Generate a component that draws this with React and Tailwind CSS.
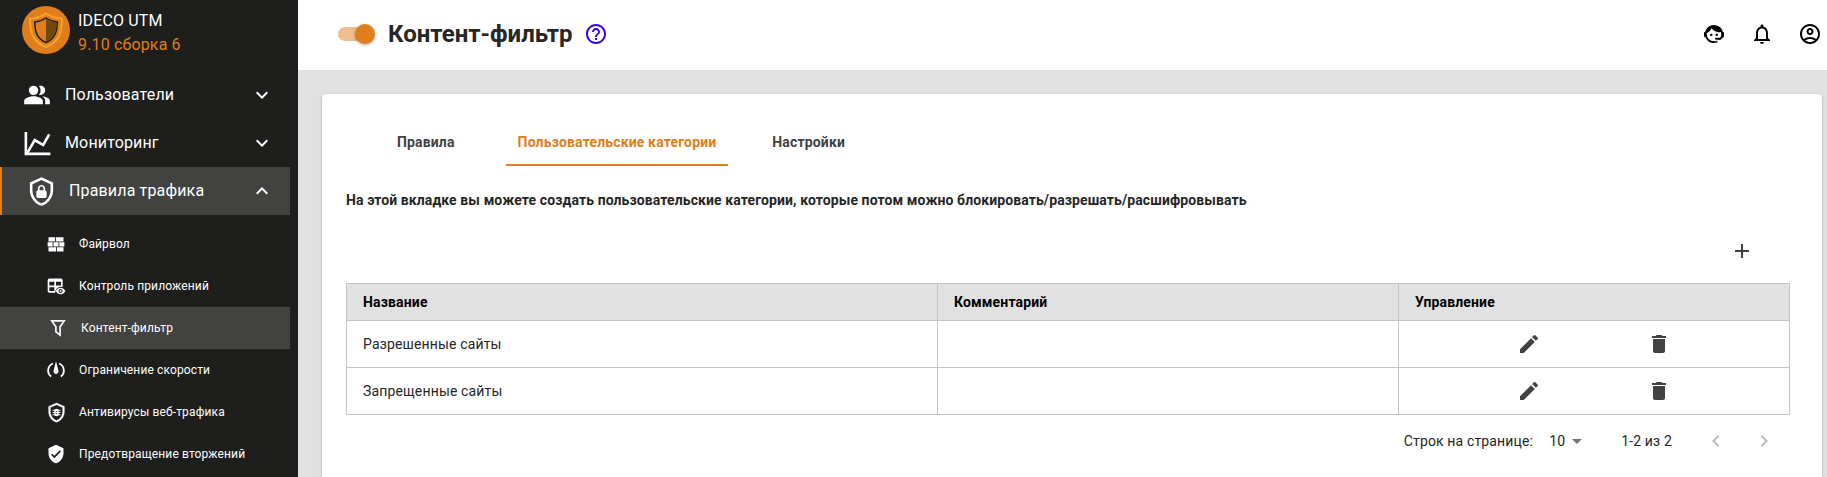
import {
  MdPeopleAlt, MdExpandMore, MdExpandLess, MdHelpOutline, MdNotificationsNone,
  MdOutlineAccountCircle, MdAdd, MdEdit, MdDelete, MdChevronLeft, MdChevronRight, MdArrowDropDown,
} from "react-icons/md";

const Svg = ({ className, children }) => (
  <svg viewBox="0 0 24 24" fill="currentColor" className={`shrink-0 ${className}`}>{children}</svg>
);

const SHIELD = "M21,11C21,16.55 17.16,21.74 12,23C6.84,21.74 3,16.55 3,11V5L12,1L21,5V11M12,21C15.75,20 19,15.54 19,11.22V6.3L12,3.18L5,6.3V11.22C5,15.54 8.25,20 12,21Z";

const ChartIcon = () => (
  <Svg className="size-[31px]"><path d="M16,11.78L20.24,4.45L21.97,5.45L16.74,14.5L10.23,10.75L5.46,19H22V21H2V3H4V17.54L9.5,8L16,11.78Z" /></Svg>
);
const ShieldLockIcon = () => (
  <Svg className="size-[31px]"><path d={SHIELD + "M14.8,11V9.5C14.8,8.1 13.4,7 12,7C10.6,7 9.2,8.1 9.2,9.5V11C8.6,11 8,11.6 8,12.2V15.7C8,16.4 8.6,17 9.2,17H14.7C15.4,17 16,16.4 16,15.8V12.3C16,11.6 15.4,11 14.8,11M13.5,11H10.5V9.5C10.5,8.7 11.2,8.2 12,8.2C12.8,8.2 13.5,8.7 13.5,9.5V11Z"} /></Svg>
);
const WallIcon = () => (
  <Svg className="size-5"><path d="M3,16H12V21H3V16M2,10H8V15H2V10M9,10H15V15H9V10M16,10H22V15H16V10M13,16H21V21H13V16M3,4H11V9H3V4M12,4H21V9H12V4Z" /></Svg>
);
const TableEyeIcon = () => (
  <Svg className="size-5">
    <path fillRule="evenodd" d="M4 3H18A2 2 0 0 1 20 5V13.2A8 8 0 0 0 11.500 17.500L11 20H4A2 2 0 0 1 2 18V5A2 2 0 0 1 4 3M4 7V11.500H10V7H4M12 7V11.500H18V7H12M4 13.500V18H10V13.500H4Z" />
    <path fillRule="evenodd" d="M17.500 14C20 14 22.200 15.600 23.200 18C22.200 20.400 20 22 17.500 22S12.800 20.400 11.800 18C12.800 15.600 15 14 17.500 14M17.500 15.500A2.500 2.500 0 0 0 17.500 20.500A2.500 2.500 0 0 0 17.500 15.500M17.500 16.800A1.200 1.200 0 0 1 17.500 19.200A1.200 1.200 0 0 1 17.500 16.800Z" />
  </Svg>
);
const FilterIcon = () => (
  <Svg className="size-5"><path d="M4.500 3.500H19.500L14.500 10.500V20.500L9.500 16.500V10.500Z" fill="none" stroke="currentColor" strokeWidth="2" /></Svg>
);
const SpeedIcon = () => (
  <Svg className="size-5">
    <path d="M8.200 4.200A9 9 0 0 0 6.300 19.800M15.800 4.200A9 9 0 0 1 17.700 19.800" fill="none" stroke="currentColor" strokeWidth="2.200" />
    <path d="M12 1.500L14.900 13A3 3 0 1 1 9.100 13Z" />
  </Svg>
);
const ShieldBugIcon = () => (
  <Svg className="size-[21px]">
    <path d={SHIELD} stroke="currentColor" strokeWidth="0.400" />
    <rect x="9.500" y="7.600" width="5" height="8.800" rx="2.400" />
    <path d="M7.500 9.400H16.500M7.500 12H16.500M7.500 14.600H16.500" stroke="currentColor" strokeWidth="1.200" />
    <path d="M11 10.900H13M11 13.200H13" stroke="#1e1e1c" strokeWidth="0.900" />
  </Svg>
);
const ShieldCheckIcon = () => (
  <Svg className="size-5"><path d="M10,17L6,13L7.41,11.59L10,14.17L16.59,7.58L18,9M12,1L3,5V11C3,16.55 6.84,21.74 12,23C17.16,21.74 21,16.55 21,11V5L12,1Z" /></Svg>
);
const AgentIcon = () => (
  <Svg className="size-6"><path d="M18.72,14.76C19.07,13.91 19.26,13 19.26,12C19.26,11.28 19.15,10.59 18.96,9.95C18.31,10.1 17.63,10.18 16.92,10.18C13.86,10.18 11.15,8.67 9.5,6.34C8.61,8.5 6.91,10.26 4.77,11.22C4.73,11.47 4.73,11.74 4.73,12A7.27,7.27 0 0,0 12,19.27C13.05,19.27 14.06,19.04 14.97,18.63C15.54,19.72 15.8,20.26 15.78,20.26C14.14,20.81 12.87,21.08 12,21.08C9.58,21.08 7.27,20.13 5.57,18.42C4.53,17.38 3.76,16.11 3.33,14.73H2V10.18H3.09C3.93,6.04 7.6,2.92 12,2.92C14.4,2.92 16.71,3.87 18.42,5.58C19.69,6.84 20.54,8.45 20.89,10.18H22V14.73H21.94L18.38,18L13.08,17.4V15.73H17.91L18.72,14.76M9.27,11.77A1.14,1.14 0 1,1 9.27,14.04A1.14,1.14 0 1,1 9.27,11.77M14.72,11.77A1.14,1.14 0 1,1 14.72,14.04A1.14,1.14 0 1,1 14.72,11.77Z" /></Svg>
);

const Logo = () => (
  <svg viewBox="0 0 48 48" className="size-12 shrink-0">
    <circle cx="24" cy="24" r="24" fill="#e07e1b" />
    <path d="M24 7.500C19 10.800 13.500 12.300 8 12.700C8 27 11.500 36.500 24 41C36.500 36.500 40 27 40 12.700C34.500 12.300 29 10.800 24 7.500Z" fill="#e07e1b" stroke="#fba22c" strokeWidth="2" />
    <path d="M24 12C20.500 14.500 17 15.600 12.700 16C12.900 26.500 15.500 33 24 36.500C32.500 33 35.100 26.500 35.300 16C31 15.600 27.500 14.500 24 12Z" fill="#e07e1b" stroke="#1e1e1c" strokeWidth="1.500" />
    <path d="M24 12.700C27.500 15 31 16.200 34.600 16.600C34.400 26.500 32 32.500 24 35.800Z" fill="#704808" />
  </svg>
);

const subItems = [
  ["Файрвол", WallIcon],
  ["Контроль приложений", TableEyeIcon],
  ["Контент-фильтр", FilterIcon, true],
  ["Ограничение скорости", SpeedIcon],
  ["Антивирусы веб-трафика", ShieldBugIcon],
  ["Предотвращение вторжений", ShieldCheckIcon],
];

function Sidebar() {
  return (
    <aside className="h-full w-[298px] shrink-0 bg-[#1e1e1c] pr-2 tracking-[0.15px] text-white">
      <div className="flex h-[71px] gap-2 pl-[22px] pt-[6px]">
        <Logo />
        <div className="pt-[3px] text-base leading-6">
          <div>IDECO UTM</div>
          <div className="text-[#e07e1b]">9.10 сборка 6</div>
        </div>
      </div>
      <div className="flex h-12 items-center pl-[23px] pr-4">
        <MdPeopleAlt className="mr-[14px] size-7" />
        <span className="flex-1 text-base">Пользователи</span>
        <MdExpandMore className="size-6" />
      </div>
      <div className="flex h-12 items-center pl-[22px] pr-4">
        <span className="mr-3"><ChartIcon /></span>
        <span className="flex-1 text-base">Мониторинг</span>
        <MdExpandMore className="size-6" />
      </div>
      <div className="flex h-12 items-center border-l-2 border-[#e07e1b] bg-[#424240] pl-6 pr-4">
        <span className="mr-3"><ShieldLockIcon /></span>
        <span className="flex-1 text-base">Правила трафика</span>
        <MdExpandLess className="size-6" />
      </div>
      <div className="pt-2">
        {subItems.map(([label, Icon, active]) => (
          <div key={label} className={`flex h-[42px] items-center text-xs tracking-[0.13px] ${active ? "bg-[#424240] pl-12" : "pl-[46px]"}`}>
            <span className="flex w-[33px]"><Icon /></span>
            <span>{label}</span>
          </div>
        ))}
      </div>
    </aside>
  );
}

function Header() {
  return (
    <header className="flex h-[70px] shrink-0 items-center bg-white pb-[2px] pl-10 pr-[5px]">
      <div className="flex h-[14px] w-[34px] items-center justify-end rounded-full bg-[#efbe8d]">
        <div className="-mr-[3px] size-5 shrink-0 rounded-full bg-[#e07e1b] shadow-[0_1px_3px_rgba(0,0,0,0.35)]" />
      </div>
      <h1 className="ml-4 text-2xl font-bold text-[#262626]">Контент-фильтр</h1>
      <MdHelpOutline className="ml-3 size-6 text-[#3300ff]" />
      <div className="ml-auto flex gap-6 text-black">
        <AgentIcon />
        <MdNotificationsNone className="size-6" />
        <MdOutlineAccountCircle className="size-6" />
      </div>
    </header>
  );
}

const cell = "border border-[#c4c4c4] px-4 text-left";

function Categories() {
  return (
    <table className="w-[1444px] table-fixed border-collapse text-sm tracking-[0.15px]">
      <colgroup>
        <col className="w-[591px]" />
        <col className="w-[461px]" />
        <col className="w-[391px]" />
      </colgroup>
      <thead>
        <tr className="h-[37px] bg-[#e1e1e1] text-black">
          {["Название", "Комментарий", "Управление"].map((h) => (
            <th key={h} className={`${cell} py-0 font-bold`}>{h}</th>
          ))}
        </tr>
      </thead>
      <tbody className="text-[#262626]">
        {["Разрешенные сайты", "Запрещенные сайты"].map((name) => (
          <tr key={name} className="h-[47px]">
            <td className={cell}>{name}</td>
            <td className={cell} />
            <td className={cell}>
              <div className="flex justify-center gap-[106px] text-[#424242]">
                <MdEdit className="size-6" />
                <MdDelete className="size-6" />
              </div>
            </td>
          </tr>
        ))}
      </tbody>
    </table>
  );
}

export default function App() {
  return (
    <div className="flex h-[477px] w-[1827px] overflow-hidden bg-[#e1e1e1] font-[Roboto,sans-serif]">
      <Sidebar />
      <div className="flex min-w-0 flex-1 flex-col">
        <Header />
        <main className="ml-6 mr-[5px] mt-6 flex-1 rounded-t bg-white pl-6 shadow-[0_1px_3px_rgba(0,0,0,0.25)]">
          <nav className="flex pt-6 pl-[39px] text-sm font-bold tracking-[0.15px] text-[#424242]">
            <div className="flex h-12 items-center px-3">Правила</div>
            <div className="ml-[39px] flex h-12 items-center border-b-2 border-[#e07e1b] px-3 pt-[2px] text-[#e07e1b]">Пользовательские категории</div>
            <div className="ml-8 flex h-12 items-center px-3">Настройки</div>
          </nav>
          <p className="mt-6 text-sm font-bold leading-5 tracking-[0.1px] text-[#262626]">
            На этой вкладке вы можете создать пользовательские категории, которые потом можно блокировать/разрешать/расшифровывать
          </p>
          <div className="flex h-[73px] w-[1444px] items-center justify-end pr-9 pt-2 text-[#424242]">
            <MdAdd className="size-6" />
          </div>
          <Categories />
          <div className="flex h-[52px] w-[1444px] items-center justify-end text-sm tracking-[0.15px] text-[#262626]">
            <span>Строк на странице:</span>
            <span className="ml-4">10</span>
            <MdArrowDropDown className="size-6 text-[#757575]" />
            <span className="ml-8">1-2 из 2</span>
            <MdChevronLeft className="ml-8 size-6 text-[#bdbdbd]" />
            <MdChevronRight className="ml-6 mr-[14px] size-6 text-[#bdbdbd]" />
          </div>
        </main>
      </div>
    </div>
  );
}
